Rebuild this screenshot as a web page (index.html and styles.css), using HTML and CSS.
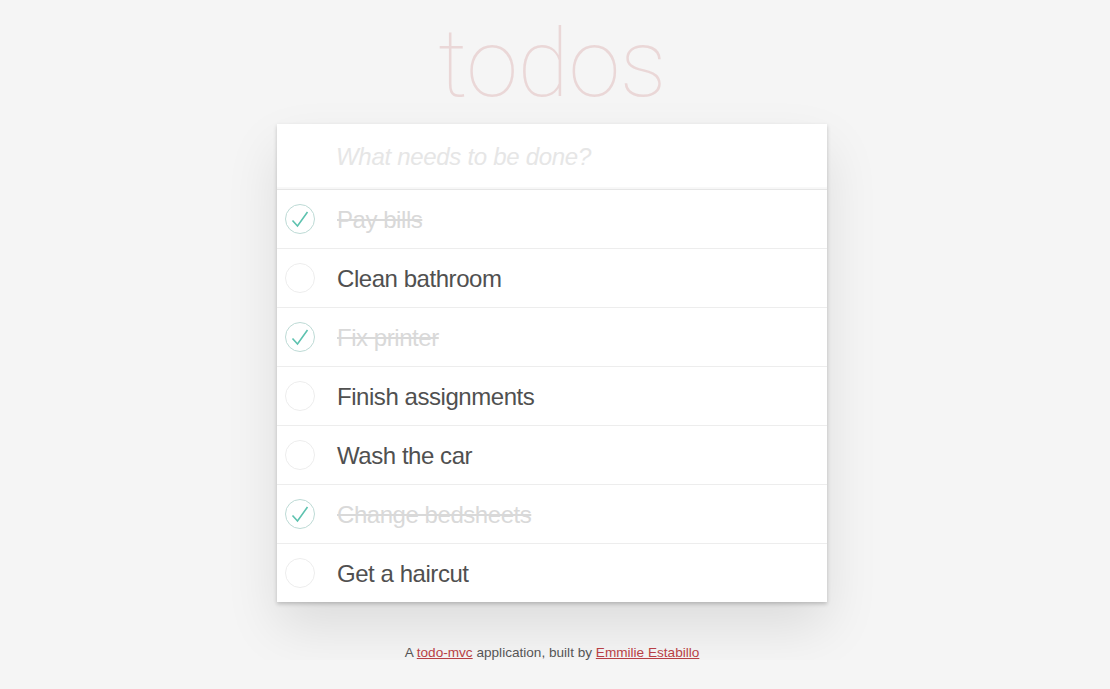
FILE: index.html
```html
<!DOCTYPE html>
<html lang="en">
<head>
<meta charset="utf-8">
<title>todos</title>
<link rel="stylesheet" href="styles.css">
</head>
<body>
<div class="page">
  <section class="todoapp">
    <h1 class="title">todos</h1>
    <div class="card">
      <input class="new-todo" type="text" placeholder="What needs to be done?">
      <ul class="todo-list">
        <li class="item done">
          <svg class="check" width="30" height="30" viewBox="0 0 30 30"><circle cx="15" cy="15" r="14.5" fill="none" stroke="#bddad5" stroke-width="1"/><path d="M7.5 16.5 L12.5 22 L22.5 8" fill="none" stroke="#5dc2af" stroke-width="1.6"/></svg>
          <span class="label">Pay bills</span>
        </li>
        <li class="item">
          <svg class="check" width="30" height="30" viewBox="0 0 30 30"><circle cx="15" cy="15" r="14.5" fill="none" stroke="#ededed" stroke-width="1"/></svg>
          <span class="label">Clean bathroom</span>
        </li>
        <li class="item done">
          <svg class="check" width="30" height="30" viewBox="0 0 30 30"><circle cx="15" cy="15" r="14.5" fill="none" stroke="#bddad5" stroke-width="1"/><path d="M7.5 16.5 L12.5 22 L22.5 8" fill="none" stroke="#5dc2af" stroke-width="1.6"/></svg>
          <span class="label">Fix printer</span>
        </li>
        <li class="item">
          <svg class="check" width="30" height="30" viewBox="0 0 30 30"><circle cx="15" cy="15" r="14.5" fill="none" stroke="#ededed" stroke-width="1"/></svg>
          <span class="label">Finish assignments</span>
        </li>
        <li class="item">
          <svg class="check" width="30" height="30" viewBox="0 0 30 30"><circle cx="15" cy="15" r="14.5" fill="none" stroke="#ededed" stroke-width="1"/></svg>
          <span class="label">Wash the car</span>
        </li>
        <li class="item done">
          <svg class="check" width="30" height="30" viewBox="0 0 30 30"><circle cx="15" cy="15" r="14.5" fill="none" stroke="#bddad5" stroke-width="1"/><path d="M7.5 16.5 L12.5 22 L22.5 8" fill="none" stroke="#5dc2af" stroke-width="1.6"/></svg>
          <span class="label">Change bedsheets</span>
        </li>
        <li class="item">
          <svg class="check" width="30" height="30" viewBox="0 0 30 30"><circle cx="15" cy="15" r="14.5" fill="none" stroke="#ededed" stroke-width="1"/></svg>
          <span class="label">Get a haircut</span>
        </li>
      </ul>
    </div>
  </section>
  <footer class="info">A <a href="#">todo-mvc</a> application, built by <a href="#">Emmilie Estabillo</a></footer>
</div>
</body>
</html>
```

FILE: styles.css
```css
* { box-sizing: border-box; }
html, body { margin: 0; padding: 0; }
body {
  background: #f5f5f5;
  font-family: "Helvetica Neue", Helvetica, "Liberation Sans", Arial, sans-serif;
  color: #4d4d4d;
  -webkit-font-smoothing: antialiased;
}
.page {
  padding-right: 6px;
}
.todoapp {
  width: 550px;
  margin: 0 auto;
}
.title {
  height: 100px;
  margin: 12px 0 12px 0;
  font-family: Roboto, "Liberation Sans", sans-serif;
  font-weight: 100;
  font-size: 94px;
  line-height: 104px;
  letter-spacing: -0.5px;
  text-align: center;
  color: rgba(175, 47, 47, 0.15);
}
.card {
  background: #fff;
  box-shadow: 0 2px 4px rgba(0, 0, 0, 0.2), 0 25px 50px 0 rgba(0, 0, 0, 0.1);
}
.new-todo {
  display: block;
  width: 100%;
  height: 65px;
  margin: 0;
  padding: 16px 16px 16px 59px;
  border: none;
  outline: none;
  background: transparent;
  font-family: inherit;
  font-size: 24px;
  letter-spacing: -0.3px;
  color: #4d4d4d;
  box-shadow: inset 0 -2px 1px rgba(0, 0, 0, 0.03);
}
.new-todo::placeholder {
  font-style: italic;
  font-weight: 300;
  color: #e6e6e6;
}
.todo-list {
  margin: 0;
  padding: 0;
  list-style: none;
  border-top: 1px solid #e6e6e6;
}
.item {
  display: flex;
  align-items: center;
  height: 59px;
  border-bottom: 1px solid #ededed;
}
.item:last-child {
  height: 58px;
  border-bottom: none;
}
.check {
  flex: none;
  margin-left: 8px;
}
.label {
  margin-left: 22px;
  padding-top: 2px;
  font-size: 24px;
  line-height: 28px;
  letter-spacing: -0.45px;
  color: #505050;
}
.done .label {
  color: #d9d9d9;
  text-decoration: line-through;
}
.info {
  margin-top: 43px;
  text-align: center;
  font-size: 13.6px;
  line-height: 15px;
  color: #555;
}
.info a {
  color: #b83f45;
  text-decoration: underline;
}
```
